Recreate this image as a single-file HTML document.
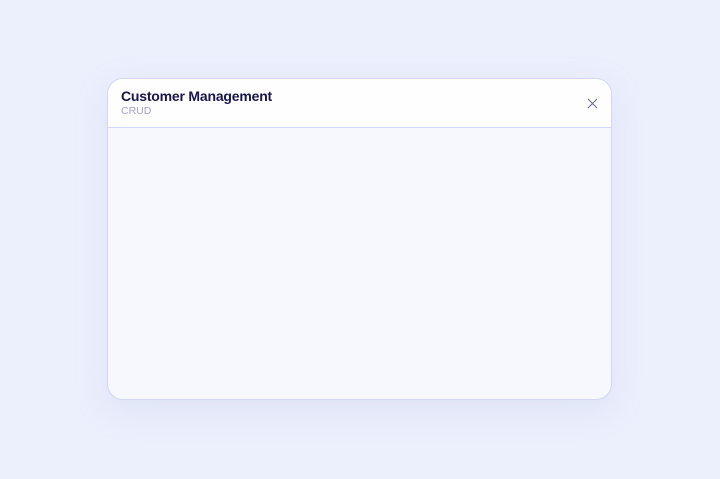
<!DOCTYPE html>
<html><head><style>
html,body{margin:0;width:720px;height:479px;background:#eceffc;font-family:"Liberation Sans",sans-serif;overflow:hidden}
.card{position:absolute;left:107px;top:78px;width:503px;height:320px;border:1.5px solid #d3d6f7;border-radius:16px;background:#f7f7fe;overflow:hidden;box-shadow:0 10px 30px rgba(180,190,235,0.25)}
.hd{height:48px;background:#fefeff;border-bottom:1.5px solid #d3d6f7;position:relative}
.t{position:absolute;left:13px;top:9px;font-size:14px;font-weight:bold;color:#16164a;letter-spacing:-0.2px}
.s{position:absolute;left:13px;top:26px;font-size:10.5px;color:#a2a4c4}
svg{position:absolute;right:13px;top:19px}
</style></head><body>
<div class="card"><div class="hd"><div class="t">Customer Management</div><div class="s">CRUD</div>
<svg width="11" height="11" viewBox="0 0 11 11"><path d="M1 1L10 10M10 1L1 10" stroke="#6a6c94" stroke-width="1.1"/></svg></div></div>
</body></html>
